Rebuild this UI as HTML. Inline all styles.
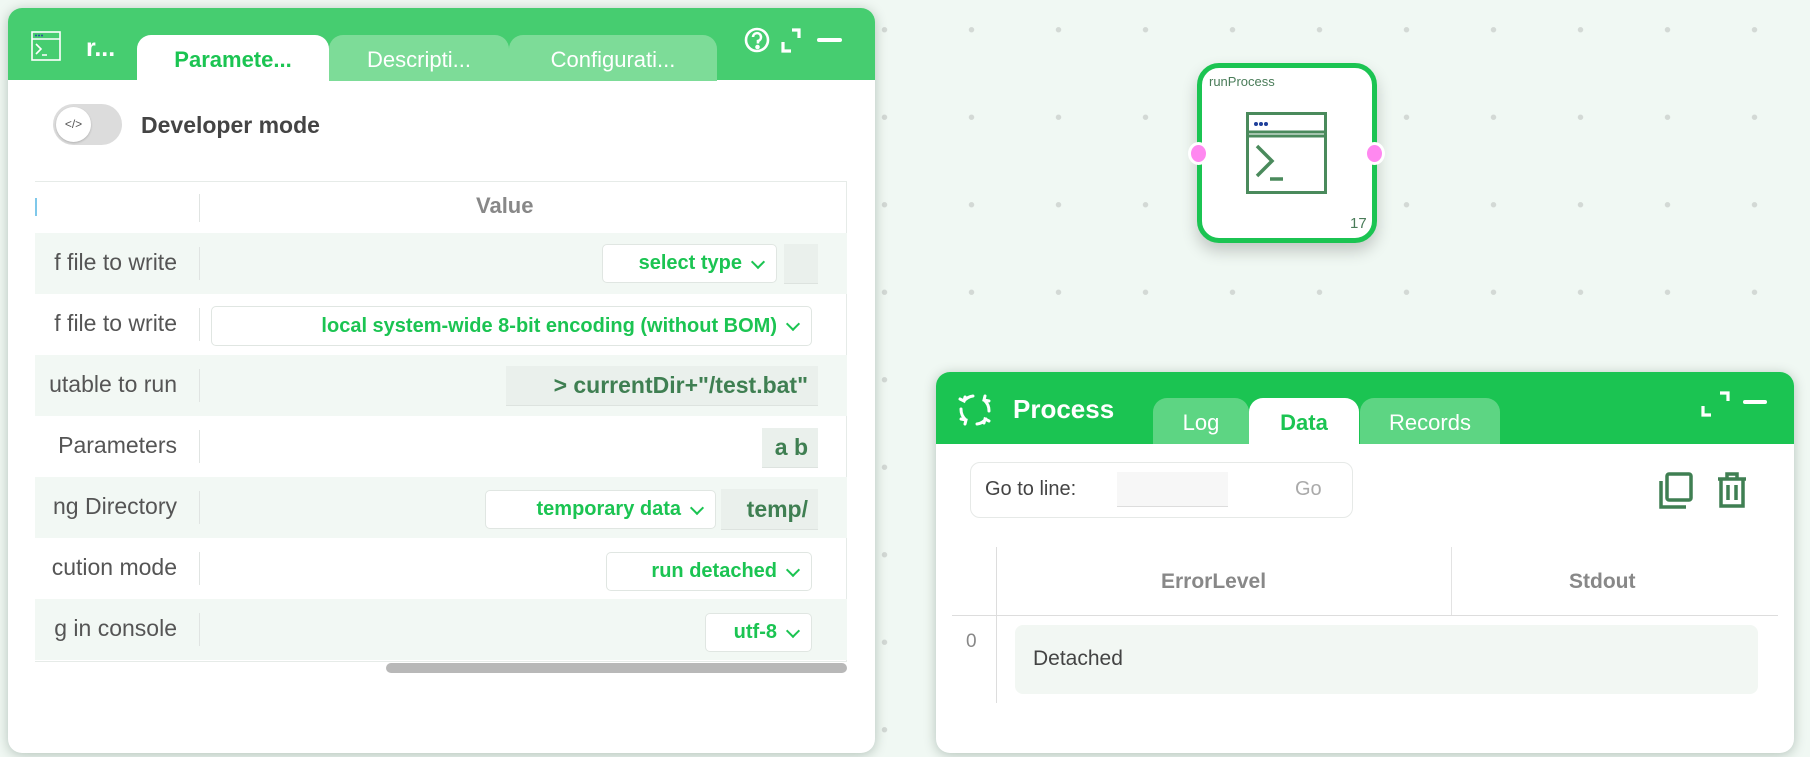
<!DOCTYPE html>
<html><head><meta charset="utf-8"><style>
*{box-sizing:border-box;margin:0;padding:0}
body{width:1810px;height:757px;overflow:hidden;font-family:"Liberation Sans",sans-serif;background:#f0f8f3;position:relative;
background-image:radial-gradient(circle,#d3d9d5 2.4px,transparent 3px);background-size:87px 87.5px;background-position:841px -14px}
.abs{position:absolute}
.panel{position:absolute;background:#fff;border-radius:14px;overflow:hidden;box-shadow:0 2px 12px rgba(0,40,20,.25)}
.hdr{position:absolute;left:0;top:0;right:0}
.tab{position:absolute;border-radius:14px 14px 0 0;color:#fff;font-size:22px;text-align:center}
.lbl{position:absolute;left:0;top:16px;width:142px;text-align:right;font-size:23px;color:#555;white-space:nowrap;overflow:hidden}
.row{position:absolute;left:35px;width:812px;height:61px}
.sep{position:absolute;left:164px;top:14px;width:1px;height:33px;background:#e0e4e2}
.sel{position:absolute;border:1px solid #e0e6e2;border-radius:5px;background:#fff;color:#1bc452;font-weight:bold;font-size:20px;display:flex;align-items:center;justify-content:flex-end;padding-right:34px}
.sel:after{content:"";position:absolute;right:13px;top:50%;width:8px;height:8px;border-right:2px solid #1bc452;border-bottom:2px solid #1bc452;transform:translateY(-70%) rotate(45deg)}
.gray{position:absolute;background:#eaf0ec;border-bottom:1px solid #dde3df;color:#3f7f52;font-weight:bold;font-size:23px;display:flex;align-items:center;justify-content:flex-end;padding-right:10px}
</style></head><body>

<div class="panel" style="left:8px;top:8px;width:867px;height:745px">
 <div class="hdr" style="height:72px;background:#46cd70"></div>
 <svg class="abs" style="left:23px;top:23px" width="30" height="30" viewBox="0 0 30 30" fill="none" stroke="#fff" stroke-width="1.6"><rect x="1" y="1" width="28" height="28"/><line x1="1" y1="8" x2="29" y2="8"/><path d="M5 13l5 5-5 5M11 24h5"/><g fill="#2b4aa0" stroke="none"><circle cx="5" cy="4.5" r="1"/><circle cx="8" cy="4.5" r="1"/><circle cx="11" cy="4.5" r="1"/></g></svg>
 <div class="abs" style="left:78px;top:26px;color:#fff;font-weight:bold;font-size:25px">r...</div>
 <div class="tab" style="left:129px;top:27px;width:192px;height:46px;background:#fff;color:#1bc452;font-weight:bold;line-height:50px">Paramete...</div>
 <div class="tab" style="left:321px;top:27px;width:180px;height:46px;background:#7ddc98;line-height:50px">Descripti...</div>
 <div class="tab" style="left:501px;top:27px;width:208px;height:46px;background:#7ddc98;line-height:50px">Configurati...</div>
 <svg class="abs" style="left:734px;top:19px" width="100" height="34" viewBox="0 0 100 34" fill="none" stroke="#fff" stroke-width="2.6"><circle cx="15" cy="13" r="11"/><path d="M11 10a4 4 0 1 1 5 4v2.5" /><circle cx="15.5" cy="20" r="1" fill="#fff"/><path d="M50 3h7v8M41 15v9h8" stroke-width="3.2"/><path d="M77 13h21" stroke-width="4" stroke-linecap="round"/></svg>
 <div class="abs" style="left:45px;top:96px;width:69px;height:41px;border-radius:21px;background:#dcdcdc"></div>
 <div class="abs" style="left:48px;top:99px;width:35px;height:35px;border-radius:50%;background:#fff;box-shadow:0 1px 2px rgba(0,0,0,.2);font-size:12px;color:#555;text-align:center;line-height:35px">&lt;/&gt;</div>
 <div class="abs" style="left:133px;top:104px;font-size:23px;font-weight:bold;color:#444">Developer mode</div>
</div>
<div class="abs" style="left:35px;top:181px;width:812px;height:481px;border:1px solid #e6ebe8;border-left:none"></div>
<div class="abs" style="left:35px;top:198px;width:2px;height:18px;background:#7fc8ea"></div>
<div class="abs" style="left:199px;top:194px;width:1px;height:28px;background:#e0e4e2"></div>
<div class="abs" style="left:476px;top:193px;font-size:22px;font-weight:bold;color:#888">Value</div>
<div class="row" style="top:233px;background:#f2f8f4"><div class="lbl">f file to write</div><div class="sep"></div></div>
<div class="row" style="top:294px"><div class="lbl">f file to write</div><div class="sep"></div></div>
<div class="row" style="top:355px;background:#f2f8f4"><div class="lbl">utable to run</div><div class="sep"></div></div>
<div class="row" style="top:416px"><div class="lbl">Parameters</div><div class="sep"></div></div>
<div class="row" style="top:477px;background:#f2f8f4"><div class="lbl">ng Directory</div><div class="sep"></div></div>
<div class="row" style="top:538px"><div class="lbl">cution mode</div><div class="sep"></div></div>
<div class="row" style="top:599px;background:#f2f8f4"><div class="lbl">g in console</div><div class="sep"></div></div>
<div class="sel" style="left:602px;top:244px;width:175px;height:39px">select type</div>
<div class="gray" style="left:784px;top:244px;width:34px;height:40px"></div>
<div class="sel" style="left:211px;top:306px;width:601px;height:40px">local system-wide 8-bit encoding (without BOM)</div>
<div class="gray" style="left:506px;top:366px;width:312px;height:40px">&gt; currentDir+"/test.bat"</div>
<div class="gray" style="left:762px;top:428px;width:56px;height:40px">a b</div>
<div class="sel" style="left:485px;top:490px;width:231px;height:39px">temporary data</div>
<div class="gray" style="left:721px;top:489px;width:97px;height:41px">temp/</div>
<div class="sel" style="left:606px;top:552px;width:206px;height:39px">run detached</div>
<div class="sel" style="left:705px;top:613px;width:107px;height:39px">utf-8</div>
<div class="abs" style="left:386px;top:663px;width:461px;height:10px;border-radius:5px;background:#b8b8b8"></div>

<div class="abs" style="left:1197px;top:63px;width:180px;height:180px;border:5px solid #1bc452;border-radius:22px;background:#fff;box-shadow:0 8px 16px rgba(0,0,0,.2)"></div>
<div class="abs" style="left:1209px;top:74px;font-size:13px;color:#4a7c59">runProcess</div>
<svg class="abs" style="left:1246px;top:112px" width="81" height="82" viewBox="0 0 81 82" fill="none" stroke="#4a8a5c" stroke-width="3"><rect x="1.5" y="1.5" width="78" height="79"/><line x1="1.5" y1="20" x2="79.5" y2="20"/><line x1="1.5" y1="24" x2="79.5" y2="24"/><path d="M11 34l15 15-15 15M24 67h13" stroke-width="3.5"/><g fill="#1f3f9a" stroke="none"><circle cx="10" cy="12" r="2"/><circle cx="15" cy="12" r="2"/><circle cx="20" cy="12" r="2"/></g></svg>
<div class="abs" style="left:1350px;top:215px;font-size:15px;color:#4a7c59">17</div>
<div class="abs" style="left:1188px;top:142px;width:21px;height:23px;border-radius:50%;background:#ff88f0;border:3px solid #fff"></div>
<div class="abs" style="left:1364px;top:142px;width:21px;height:23px;border-radius:50%;background:#ff88f0;border:3px solid #fff"></div>

<div class="panel" style="left:936px;top:372px;width:858px;height:381px">
 <div class="hdr" style="height:72px;background:#1bc452"></div>
 <svg class="abs" style="left:21px;top:20px" width="36" height="36" viewBox="0 0 36 36" fill="none" stroke="#fff" stroke-width="3" stroke-linecap="round"><path d="M16 4a14 14 0 0 0-9 5M3 7l4 2 1-4"/><path d="M4 17a14 14 0 0 0 5 11M4 27l5 1-1 4"/><path d="M20 32a14 14 0 0 0 9-5M32 29l-4-2-1 4"/><path d="M32 19a14 14 0 0 0-5-11M32 9l-5-1 1-4"/></svg>
 <div class="abs" style="left:77px;top:22px;color:#fff;font-weight:bold;font-size:26px">Process</div>
 <div class="tab" style="left:217px;top:26px;width:96px;height:46px;background:#5dd583;line-height:50px">Log</div>
 <div class="tab" style="left:313px;top:26px;width:110px;height:46px;background:#fff;color:#1bc452;font-weight:bold;line-height:50px">Data</div>
 <div class="tab" style="left:424px;top:26px;width:140px;height:46px;background:#5dd583;line-height:50px">Records</div>
 <svg class="abs" style="left:765px;top:18px" width="75" height="34" viewBox="0 0 75 34" fill="none" stroke="#fff" stroke-width="3.2"><path d="M19 3h8v8M2 16v9h8"/><path d="M44 12h20" stroke-width="4" stroke-linecap="round"/></svg>
 <div class="abs" style="left:34px;top:90px;width:383px;height:56px;border:1px solid #e6e9e7;border-radius:10px"></div>
 <div class="abs" style="left:49px;top:106px;font-size:20px;color:#444">Go to line:</div>
 <div class="abs" style="left:181px;top:100px;width:111px;height:35px;background:#f7f7f7;border-bottom:1px solid #ddd"></div>
 <div class="abs" style="left:359px;top:106px;font-size:20px;color:#aaa">Go</div>
 <svg class="abs" style="left:722px;top:100px" width="40" height="38" viewBox="0 0 40 38" fill="none" stroke="#3f7f52" stroke-width="3.5"><rect x="9" y="2" width="24" height="26" rx="2"/><path d="M3 9v26h25"/></svg>
 <svg class="abs" style="left:780px;top:99px" width="32" height="38" viewBox="0 0 32 38" fill="none" stroke="#3f7f52" stroke-width="3.5"><path d="M2 8h28M11 8V3h10v5M5 8v27h22V8M12 14v15M20 14v15"/></svg>
 <div class="abs" style="left:60px;top:175px;width:1px;height:156px;background:#ddd"></div>
 <div class="abs" style="left:515px;top:175px;width:1px;height:68px;background:#e3e3e3"></div>
 <div class="abs" style="left:16px;top:243px;width:826px;height:1px;background:#ddd"></div>
 <div class="abs" style="left:225px;top:198px;font-size:21px;font-weight:bold;color:#888">ErrorLevel</div>
 <div class="abs" style="left:633px;top:198px;font-size:21px;font-weight:bold;color:#888">Stdout</div>
 <div class="abs" style="left:30px;top:259px;font-size:19px;color:#888">0</div>
 <div class="abs" style="left:79px;top:253px;width:743px;height:69px;border-radius:8px;background:#f2f7f3"></div>
 <div class="abs" style="left:97px;top:275px;font-size:21px;color:#444">Detached</div>
</div>
</body></html>
